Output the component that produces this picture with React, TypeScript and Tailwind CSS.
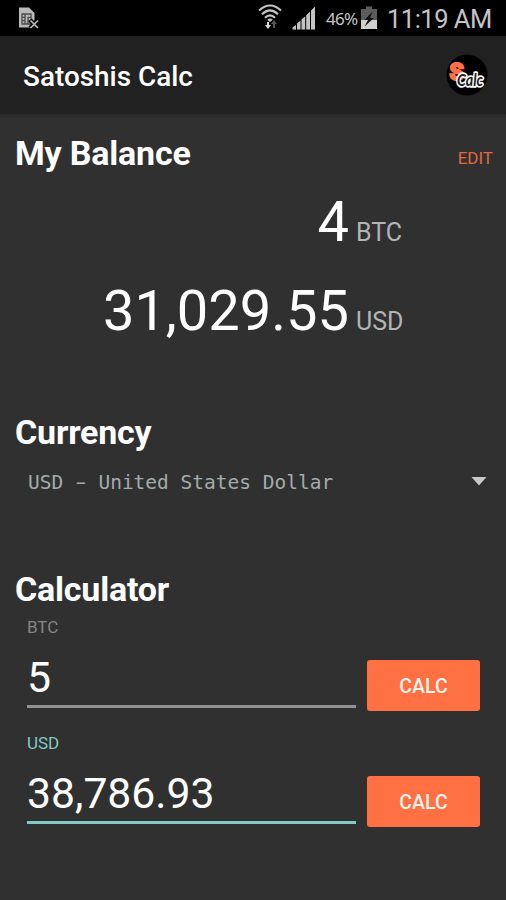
const fields = [
  {
    label: "BTC",
    value: "5",
    labelColor: "text-[#868686]",
    line: "bg-[#929292]"
  },
  {
    label: "USD",
    value: "38,786.93",
    labelColor: "text-[#80cbc4]",
    line: "bg-[#80cbc4]"
  }
];

const SimIcon = () => (
  <svg width="22" height="22" viewBox="0 0 22 22" fill="none">
    <path d="M1 0.5H11L16.5 6V20.5H1Z" fill="#b9b9b9" />
    <path d="M4 7H13V17H4ZM4 10.3H7M10 10.3H13M4 13.7H7M10 13.7H13M7 7V17M10 10V17" stroke="#4a4a4a" strokeWidth="1.3" />
    <path d="M12 13L20 21M20 13L12 21" stroke="#000" strokeWidth="4.5" />
    <path d="M12.5 13.5L20 21M20 13.5L12.5 21" stroke="#b9b9b9" strokeWidth="1.7" />
  </svg>
);

const WifiIcon = () => (
  <svg width="24" height="26" viewBox="0 0 24 26" fill="none">
    <g stroke="#c4c4c4" strokeWidth="2.1">
      <path d="M1 6.5Q12 -3.5 23 6.5" />
      <path d="M4 10.3Q12 2.6 20 10.3" />
      <path d="M7 13.8Q12 8.8 17 13.8" />
    </g>
    <path d="M9.2 15.8Q12 13 14.8 15.8L12 18Z" fill="#c4c4c4" />
    <path d="M9 18H11V21H13L10 25L7 21H9Z" fill="#d8d8d8" />
    <path d="M15 24H17V20H19L16 16L13 20H15Z" fill="#555" />
  </svg>
);

const SignalIcon = () => (
  <svg width="24" height="24" viewBox="0 0 24 24" fill="#c4c4c4">
    <path d="M0.5 23.5V21.5L4 19V23.5ZM5 23.5V17.5L8.5 14.5V23.5ZM9.5 23.5V13.5L13.2 10.2V23.5ZM14.2 23.5V9.3L18 5.5V23.5ZM19 23.5V4.5L23 0.5V23.5Z" />
  </svg>
);

const BatteryIcon = () => (
  <svg width="16" height="23" viewBox="0 0 16 23">
    <path d="M5 0.5H11V3H16V14H0V3H5Z" fill="#5c5c5c" />
    <path d="M0 14H16V23H0Z" fill="#d0d0d0" />
    <path d="M11.5 5.5L3.5 14H7L3.5 20.5L13 12H9Z" fill="#111" />
  </svg>
);

const LogoBadge = () => (
  <svg width="42" height="42" viewBox="0 0 42 42">
    <circle cx="21" cy="21" r="20.5" fill="#000" />
    <text x="3.5" y="25.5" fontFamily="Roboto, sans-serif" fontSize="23" fontWeight="900" fill="#ff7043" stroke="#ff7043" strokeWidth="2">
      S
    </text>
    <text
      x="11"
      y="31.5"
      textLength="26"
      lengthAdjust="spacingAndGlyphs"
      fontFamily="Lato, sans-serif"
      fontSize="17"
      fontStyle="italic"
      fontWeight="700"
      fill="#222"
      stroke="#fff"
      strokeWidth="3.4"
      strokeLinejoin="round"
      paintOrder="stroke"
    >
      Calc
    </text>
  </svg>
);

const StatusBar = () => (
  <div className="flex h-9 items-start bg-black text-[#c4c4c4]">
    <div className="ml-[18px] mt-[7px]">
      <SimIcon />
    </div>
    <div className="ml-auto mt-[4px]">
      <WifiIcon />
    </div>
    <div className="ml-[10px] mt-[6px]">
      <SignalIcon />
    </div>
    <span className="ml-[10px] mt-[9px] w-[33px] whitespace-nowrap font-['Noto_Sans',sans-serif] text-[17px] leading-5 tracking-[-0.7px]">46%</span>
    <div className="ml-[2px] mt-[6px]">
      <BatteryIcon />
    </div>
    <span className="ml-[10px] mr-[14px] mt-[4px] w-[105px] whitespace-nowrap text-[25.5px] leading-[30px] tracking-[-0.5px]">11:19 AM</span>
  </div>
);

const Heading = ({ children }: { children: string }) => (
  <h2 className="text-[34px] font-bold leading-10 tracking-[-0.2px] text-white">{children}</h2>
);

const Amount = ({ value, unit }: { value: string; unit: string }) => (
  <div className="flex items-baseline">
    <span className="flex-1 text-right text-[56px] leading-[66px] text-white">{value}</span>
    <span className="ml-[7px] w-[150px] text-[25px] text-[#b4b4b4]">{unit}</span>
  </div>
);

export default function App() {
  return (
    <div className="h-[900px] w-[506px] overflow-hidden bg-[#303030] font-[Roboto,sans-serif]">
      <StatusBar />
      <header className="flex h-[78px] items-center justify-between bg-[#212121] pl-[23px] pr-[18px]">
        <h1 className="pt-[3px] text-[27.9px] font-medium leading-8 text-white">Satoshis Calc</h1>
        <LogoBadge />
      </header>

      <section className="h-[298px] bg-linear-to-b from-[#292929] to-[#303030] to-[6px] pt-[19px]">
        <div className="flex items-start justify-between pl-[15px] pr-[13px]">
          <Heading>My Balance</Heading>
          <button className="mt-[15px] text-[17px] leading-5 text-[#e0683f]">EDIT</button>
        </div>
        <div className="mt-[16px] flex flex-col gap-[23px]">
          <Amount value="4" unit="BTC" />
          <Amount value="31,029.55" unit="USD" />
        </div>
      </section>

      <section className="h-[157px] px-[15px]">
        <Heading>Currency</Heading>
        <div className="mt-[18px] flex items-start justify-between pl-[13px] pr-[4px]">
          <span className="whitespace-pre pt-px font-['DejaVu_Sans_Mono',monospace] text-[19.5px] leading-6 text-[#a3acac]">
            USD <span className="inline-block w-[11.7px] text-center font-['Noto_Sans',sans-serif] leading-none">–</span> United States Dollar
          </span>
          <svg className="mt-[7px]" width="16" height="9" viewBox="0 0 16 9">
            <path d="M0.5 0H15.5L8 8.5Z" fill="#c8c8c8" />
          </svg>
        </div>
      </section>

      <section className="px-[15px]">
        <Heading>Calculator</Heading>
        <div className="flex flex-col pl-3 pr-[11px]">
          {fields.map((field) => (
            <div key={field.label} className="flex h-[116px] items-start justify-between">
              <div className="w-[329px] pt-[8px]">
                <div className={`text-[17px] leading-5 ${field.labelColor}`}>{field.label}</div>
                <div className="mt-[15px] text-[42.7px] leading-[50px] text-white">{field.value}</div>
                <div className={`mt-[3px] h-[3px] ${field.line}`} />
              </div>
              <button className="mt-[51px] h-[51px] w-[113px] rounded-[3px] bg-[#ff7043] pt-[2px] text-[19.5px] font-medium text-[#fff3ee]">CALC</button>
            </div>
          ))}
        </div>
      </section>
    </div>
  );
}
